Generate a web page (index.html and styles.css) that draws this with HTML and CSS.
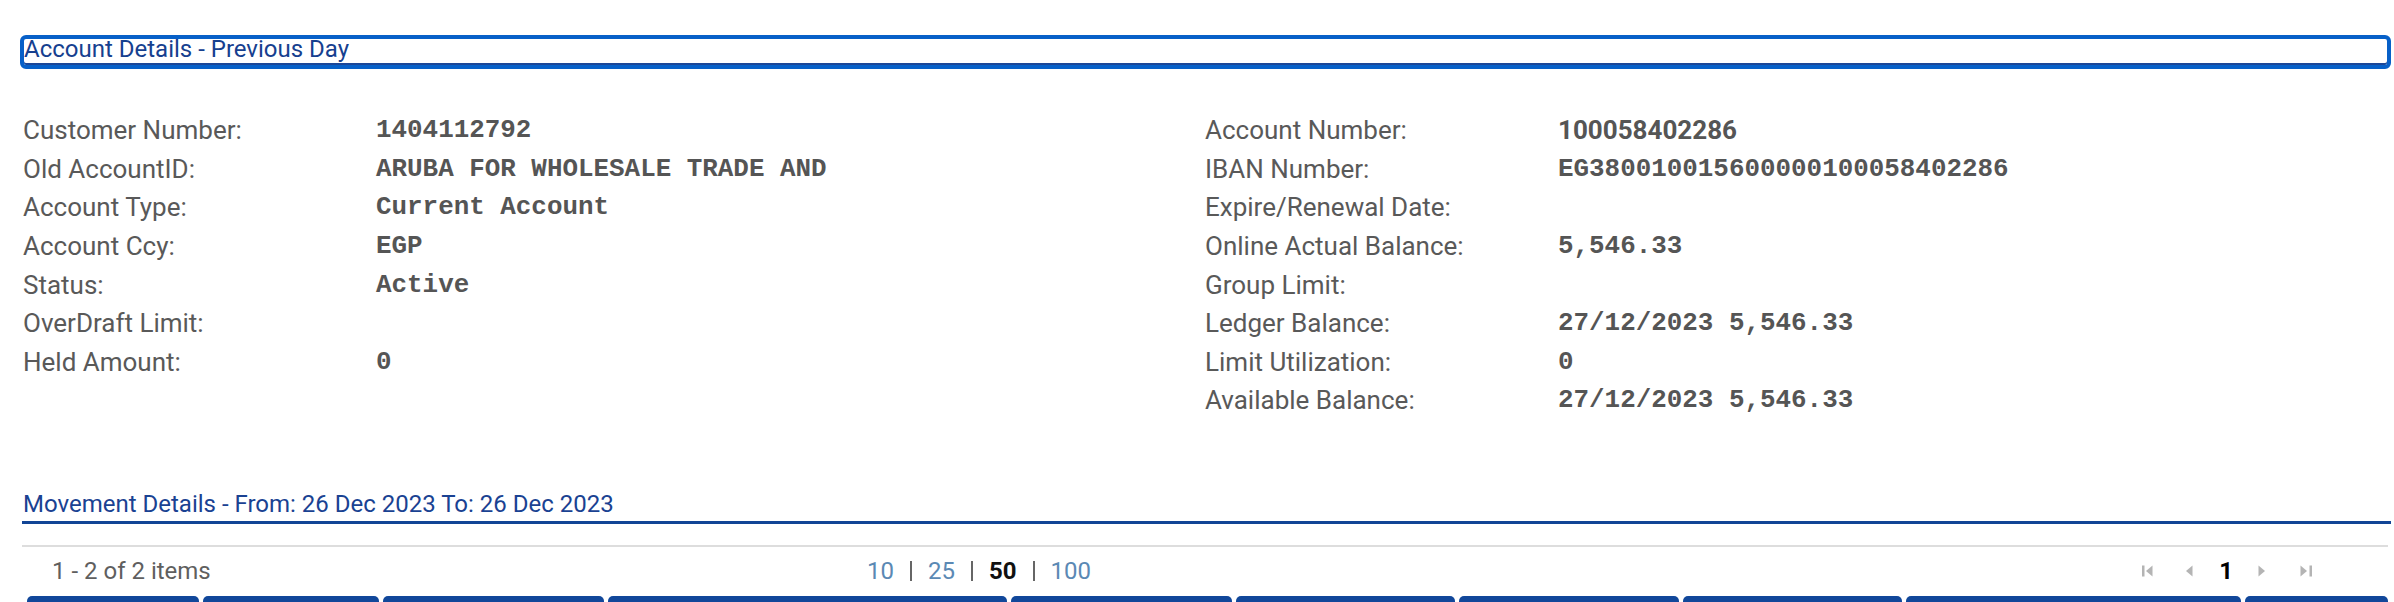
FILE: index.html
```html
<!DOCTYPE html>
<html>
<head>
<meta charset="utf-8">
<link rel="stylesheet" href="styles.css">
</head>
<body>
<div class="page">
  <div class="section-title">Account Details - Previous Day</div>

  <div class="details">
    <div class="col">
      <div class="row"><span class="lbl">Customer Number:</span><span class="val mono">1404112792</span></div>
      <div class="row"><span class="lbl">Old AccountID:</span><span class="val mono">ARUBA FOR WHOLESALE TRADE AND</span></div>
      <div class="row"><span class="lbl">Account Type:</span><span class="val mono">Current Account</span></div>
      <div class="row"><span class="lbl">Account Ccy:</span><span class="val mono">EGP</span></div>
      <div class="row"><span class="lbl">Status:</span><span class="val mono">Active</span></div>
      <div class="row"><span class="lbl">OverDraft Limit:</span><span class="val mono"></span></div>
      <div class="row"><span class="lbl">Held Amount:</span><span class="val mono">0</span></div>
    </div>
    <div class="col">
      <div class="row"><span class="lbl">Account Number:</span><span class="val sans">100058402286</span></div>
      <div class="row"><span class="lbl">IBAN Number:</span><span class="val mono">EG380010015600000100058402286</span></div>
      <div class="row"><span class="lbl">Expire/Renewal Date:</span><span class="val mono"></span></div>
      <div class="row"><span class="lbl">Online Actual Balance:</span><span class="val mono">5,546.33</span></div>
      <div class="row"><span class="lbl">Group Limit:</span><span class="val mono"></span></div>
      <div class="row"><span class="lbl">Ledger Balance:</span><span class="val mono">27/12/2023 5,546.33</span></div>
      <div class="row"><span class="lbl">Limit Utilization:</span><span class="val mono">0</span></div>
      <div class="row"><span class="lbl">Available Balance:</span><span class="val mono">27/12/2023 5,546.33</span></div>
    </div>
  </div>

  <div class="movement-title">Movement Details - From: 26 Dec 2023 To: 26 Dec 2023</div>

  <div class="pager">
    <div class="pager-info">1 - 2 of 2 items</div>
    <div class="pager-sizes">
      <span class="size">10</span><span class="sep"></span>
      <span class="size">25</span><span class="sep"></span>
      <span class="size current">50</span><span class="sep"></span>
      <span class="size">100</span>
    </div>
    <div class="pager-nav">
      <svg class="nav-first" width="11" height="12" viewBox="0 0 11 12"><rect x="0" y="0.5" width="2.5" height="11" fill="#b4b4b4"/><polygon points="10.5,0.5 4,6 10.5,11.5" fill="#b4b4b4"/></svg>
      <svg class="nav-prev" width="7" height="12" viewBox="0 0 7 12"><polygon points="6.5,0.5 0,6 6.5,11.5" fill="#b4b4b4"/></svg>
      <span class="nav-page">1</span>
      <svg class="nav-next" width="7" height="12" viewBox="0 0 7 12"><polygon points="0.5,0.5 7,6 0.5,11.5" fill="#b4b4b4"/></svg>
      <svg class="nav-last" width="12" height="12" viewBox="0 0 12 12"><polygon points="0.5,0.5 7,6 0.5,11.5" fill="#b4b4b4"/><rect x="9.5" y="0.5" width="2.5" height="11" fill="#b4b4b4"/></svg>
    </div>
  </div>

  <div class="thead">
    <div class="th w1"></div>
    <div class="th w2"></div>
    <div class="th w3"></div>
    <div class="th w4"></div>
    <div class="th w5"></div>
    <div class="th w6"></div>
    <div class="th w7"></div>
    <div class="th w8"></div>
    <div class="th w9"></div>
    <div class="th w10"></div>
  </div>
</div>
</body>
</html>
```

FILE: styles.css
```css
html, body {
  margin: 0;
  padding: 0;
  background: #ffffff;
  overflow: hidden;
}

body {
  font-family: Roboto, "Liberation Sans", sans-serif;
  font-size: 24px;
  color: #555555;
}

.page {
  padding: 35px 3px 0 20px;
}

.section-title {
  box-sizing: border-box;
  height: 34px;
  border: 4px solid #0760c8;
  border-radius: 6px;
  box-shadow: inset 0 -2px 0 #1b4799;
  font-size: 24px;
  line-height: 20px;
  color: #16408f;
  padding: 0;
  white-space: nowrap;
}

.details {
  display: grid;
  grid-template-columns: 1182px 1fr;
  margin: 42px 0 0 3px;
}

.col {
  display: flex;
  flex-direction: column;
}

.row {
  display: grid;
  grid-template-columns: 353px 1fr;
  height: 38.6px;
  align-items: center;
}

.lbl {
  color: #595959;
  font-size: 26px;
  white-space: nowrap;
}

.val {
  color: #555555;
  font-weight: bold;
  white-space: nowrap;
}

.mono {
  font-family: "Liberation Mono", "Courier New", monospace;
  font-size: 25.9px;
}

.sans {
  font-family: Roboto, "Liberation Sans", sans-serif;
  font-size: 26px;
}

.movement-title {
  margin: 69px 0 0 2px;
  line-height: 30px;
  padding: 0 0 2px 1px;
  border-bottom: 3px solid #124596;
  color: #1a4292;
  font-size: 24px;
  white-space: nowrap;
}

.pager {
  margin: 21px 3px 0 2px;
  border-top: 2px solid #dddddd;
  height: 49px;
  display: grid;
  grid-template-columns: 815px auto 1fr auto;
  align-items: center;
  padding: 0 76px 0 30px;
}

.pager-info {
  color: #5f5f5f;
  grid-column: 1;
}

.pager-sizes {
  grid-column: 2;
  display: flex;
  align-items: center;
  gap: 16px;
}

.size {
  color: #5b89b4;
}

.size.current {
  color: #111111;
  font-weight: bold;
}

.sep {
  display: block;
  width: 2px;
  height: 20px;
  background: #666666;
}

.pager-nav {
  grid-column: 4;
  display: flex;
  align-items: center;
}

.nav-first {
  display: block;
}

.nav-prev {
  display: block;
  margin-left: 33px;
}

.nav-page {
  margin-left: 26px;
  color: #000000;
  font-weight: bold;
}

.nav-next {
  display: block;
  margin-left: 25px;
}

.nav-last {
  display: block;
  margin-left: 35px;
}

.thead {
  display: flex;
  gap: 4px;
  margin: 0 3px 0 7px;
}

.th {
  height: 40px;
  background: #11479a;
  border-radius: 5px 5px 0 0;
}

.w1 { width: 172px; }
.w2 { width: 176px; }
.w3 { width: 221px; }
.w4 { width: 399px; }
.w5 { width: 221px; }
.w6 { width: 219px; }
.w7 { width: 220px; }
.w8 { width: 219px; }
.w9 { width: 335px; }
.w10 { flex: 1; }
```
